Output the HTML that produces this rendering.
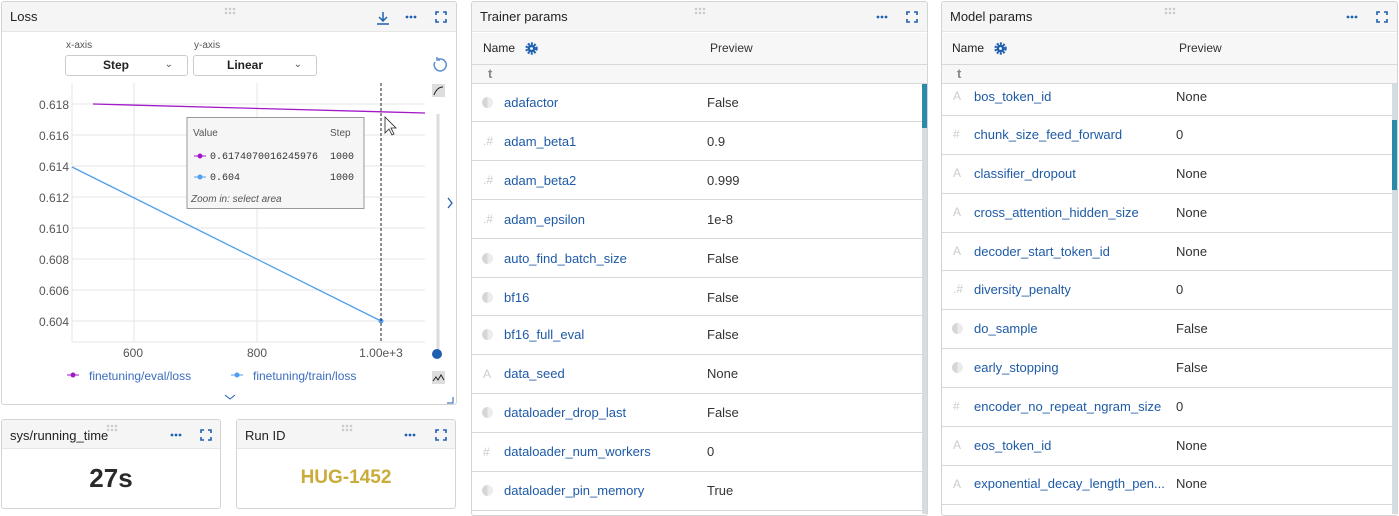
<!DOCTYPE html>
<html><head><meta charset="utf-8"><style>
*{box-sizing:border-box;margin:0;padding:0}
body{width:1399px;height:510px;overflow:hidden;background:#fff;font-family:"Liberation Sans",sans-serif;color:#222;position:relative}
.p{position:absolute;border:1px solid #d4d4d4;border-radius:3px;background:#fff;overflow:hidden}
.h{position:absolute;left:0;right:0;top:0;height:30px;background:#f5f5f5;border-bottom:1px solid #e6e6e6;font-size:13px;line-height:30px;padding-left:8px;color:#222}
.ic{position:absolute}
.grip{position:absolute;width:12px;height:8px;background:radial-gradient(circle,#ccc 1.2px,transparent 1.4px) 0 0/4px 4px}
.row{position:absolute;left:0;right:6px;border-bottom:1px solid #d8d8d8;font-size:13px}
.row .n{position:absolute;left:33px;color:#1e5aa6}
.row .v{position:absolute;color:#333}
.row .t{position:absolute;left:12px;color:#ccc;font-size:12px}
.row .hc{position:absolute;left:11px;width:11px;height:11px;border-radius:50%;background:linear-gradient(90deg,#d6d6d6 50%,#ececec 50%)}
</style></head><body>

<!-- Loss panel -->
<div class="p" style="left:1px;top:1px;width:456px;height:404px">
 <div class="h" style="background:#f5f5f5">Loss</div>
 <div class="grip" style="left:222px;top:5px"></div>
 <svg class="ic" style="left:373px;top:8px" width="16" height="16" viewBox="0 0 16 16"><path d="M8 2v9M4 7l4 4 4-4M2 14h12" stroke="#1f5fb0" stroke-width="1.5" fill="none"/></svg>
 <svg class="ic" style="left:403px;top:13px" width="12" height="4" viewBox="0 0 12 4"><circle cx="2" cy="2" r="1.4" fill="#1f5fb0"/><circle cx="6" cy="2" r="1.4" fill="#1f5fb0"/><circle cx="10" cy="2" r="1.4" fill="#1f5fb0"/></svg>
 <svg class="ic" style="left:433px;top:9px" width="12" height="12" viewBox="0 0 12 12"><path d="M1 4V1h3M8 1h3v3M11 8v3H8M4 11H1V8" stroke="#1f5fb0" stroke-width="1.6" fill="none"/></svg>
 <div style="position:absolute;left:64px;top:38px;font-size:10px;color:#555">x-axis</div>
 <div style="position:absolute;left:192px;top:38px;font-size:10px;color:#555">y-axis</div>
 <div style="position:absolute;left:63px;top:53px;width:123px;height:21px;border:1px solid #ccc;border-radius:3px;font-size:12px;font-weight:bold;line-height:19px;padding-left:37px">Step<span style="position:absolute;right:14px;top:-1px;font-weight:normal;color:#555;font-size:10px">&#8964;</span></div>
 <div style="position:absolute;left:191px;top:53px;width:124px;height:21px;border:1px solid #ccc;border-radius:3px;font-size:12px;font-weight:bold;line-height:19px;padding-left:33px">Linear<span style="position:absolute;right:14px;top:-1px;font-weight:normal;color:#555;font-size:10px">&#8964;</span></div>
 <svg class="ic" style="left:0;top:0" width="456" height="404" viewBox="1 1 456 404">
  <g stroke="#e6e6e6" stroke-width="1">
   <line x1="71" y1="103" x2="424" y2="103"/><line x1="71" y1="134" x2="424" y2="134"/><line x1="71" y1="165" x2="424" y2="165"/><line x1="71" y1="196" x2="424" y2="196"/><line x1="71" y1="227" x2="424" y2="227"/><line x1="71" y1="258" x2="424" y2="258"/><line x1="71" y1="289" x2="424" y2="289"/><line x1="71" y1="320" x2="424" y2="320"/>
   <line x1="133" y1="82" x2="133" y2="341"/><line x1="256" y1="82" x2="256" y2="341"/><line x1="71" y1="82" x2="71" y2="341"/>
   <line x1="71" y1="341" x2="424" y2="341"/>
  </g>
  <g font-family="Liberation Sans" font-size="12" fill="#555" text-anchor="end">
   <text x="68" y="108">0.618</text><text x="68" y="139">0.616</text><text x="68" y="170">0.614</text><text x="68" y="201">0.612</text><text x="68" y="232">0.610</text><text x="68" y="263">0.608</text><text x="68" y="294">0.606</text><text x="68" y="325">0.604</text>
  </g>
  <g font-family="Liberation Sans" font-size="12" fill="#555" text-anchor="middle">
   <text x="132" y="356">600</text><text x="256" y="356">800</text><text x="380" y="356">1.00e+3</text>
  </g>
  <line x1="92" y1="103" x2="424" y2="112" stroke="#a219c8" stroke-width="1.3"/>
  <line x1="71" y1="166" x2="380" y2="320" stroke="#4d9ef0" stroke-width="1.3"/>
  <circle cx="380" cy="320" r="2.5" fill="#4d9ef0"/>
  <line x1="380" y1="82" x2="380" y2="341" stroke="#222" stroke-dasharray="3,2"/>
  <path d="M384 116v16l4-4 3 6 2-1-3-6h5z" fill="#fff" stroke="#222" stroke-width="0.8"/>
  <rect x="186" y="116.5" width="177" height="91" fill="#f6f6f6" stroke="#999"/>
  <g font-family="Liberation Sans" font-size="10" fill="#555"><text x="192" y="135">Value</text><text x="329" y="135">Step</text></g>
  <g font-family="Liberation Mono" font-size="10" fill="#333"><text x="209" y="158">0.6174070016245976</text><text x="329" y="158">1000</text><text x="209" y="179">0.604</text><text x="329" y="179">1000</text></g>
  <line x1="193" y1="155" x2="205" y2="155" stroke="#a219c8"/><circle cx="199" cy="155" r="2.5" fill="#a219c8"/>
  <line x1="193" y1="176" x2="205" y2="176" stroke="#4d9ef0"/><circle cx="199" cy="176" r="2.5" fill="#4d9ef0"/>
  <text x="190" y="201" font-family="Liberation Sans" font-size="10" font-style="italic" fill="#555">Zoom in: select area</text>
  <path d="M434 61a6 6 0 1 0 6-3h-3M436 56v3h3" stroke="#5b8fd0" stroke-width="1.5" fill="none"/>
  <rect x="431" y="83" width="13" height="13" fill="#ddd"/><path d="M433 94q3-8 9-8" stroke="#222" fill="none"/>
  <line x1="437" y1="113" x2="437" y2="350" stroke="#ddd" stroke-width="3"/>
  <circle cx="436" cy="353" r="5" fill="#1f5fb0"/>
  <path d="M447 197l4 5-4 5" stroke="#1f5fb0" stroke-width="1.3" fill="none"/>
  <rect x="431" y="370" width="13" height="13" fill="#ddd"/><path d="M432 380l3-4 2 3 3-5 3 5" stroke="#222" fill="none"/>
  <line x1="66" y1="374" x2="78" y2="374" stroke="#a219c8"/><circle cx="72" cy="374" r="2.5" fill="#a219c8"/>
  <line x1="230" y1="374" x2="242" y2="374" stroke="#4d9ef0"/><circle cx="236" cy="374" r="2.5" fill="#4d9ef0"/>
  <g font-family="Liberation Sans" font-size="12" fill="#3a6dbd"><text x="88" y="379">finetuning/eval/loss</text><text x="252" y="379">finetuning/train/loss</text></g>
  <path d="M224 394l5 4 5-4" stroke="#1f5fb0" fill="none"/>
  <path d="M446 402h6v-6" stroke="#1f5fb0" fill="none"/>
 </svg>
</div>

<!-- sys/running_time -->
<div class="p" style="left:1px;top:419px;width:220px;height:90px">
 <div class="h" style="height:29px;line-height:31px">sys/running_time</div>
 <div class="grip" style="left:104px;top:4px"></div>
 <svg class="ic" style="left:168px;top:13px" width="12" height="4" viewBox="0 0 12 4"><circle cx="2" cy="2" r="1.4" fill="#1f5fb0"/><circle cx="6" cy="2" r="1.4" fill="#1f5fb0"/><circle cx="10" cy="2" r="1.4" fill="#1f5fb0"/></svg>
 <svg class="ic" style="left:198px;top:9px" width="12" height="12" viewBox="0 0 12 12"><path d="M1 4V1h3M8 1h3v3M11 8v3H8M4 11H1V8" stroke="#1f5fb0" stroke-width="1.6" fill="none"/></svg>
 <div style="position:absolute;left:0;right:0;top:43px;text-align:center;font-size:26px;font-weight:bold;color:#2a2a2a">27s</div>
</div>

<!-- Run ID -->
<div class="p" style="left:236px;top:419px;width:220px;height:90px">
 <div class="h" style="height:29px;line-height:31px">Run ID</div>
 <div class="grip" style="left:104px;top:4px"></div>
 <svg class="ic" style="left:167px;top:13px" width="12" height="4" viewBox="0 0 12 4"><circle cx="2" cy="2" r="1.4" fill="#1f5fb0"/><circle cx="6" cy="2" r="1.4" fill="#1f5fb0"/><circle cx="10" cy="2" r="1.4" fill="#1f5fb0"/></svg>
 <svg class="ic" style="left:198px;top:9px" width="12" height="12" viewBox="0 0 12 12"><path d="M1 4V1h3M8 1h3v3M11 8v3H8M4 11H1V8" stroke="#1f5fb0" stroke-width="1.6" fill="none"/></svg>
 <div style="position:absolute;left:0;right:0;top:47px;text-align:center;font-size:19px;font-weight:bold;color:#c9ac3c">HUG-1452</div>
</div>

<!-- Trainer params -->
<div class="p" style="left:471px;top:1px;width:457px;height:515px">
 <div class="h">Trainer params</div>
 <div class="grip" style="left:222px;top:5px"></div>
 <svg class="ic" style="left:404px;top:13px" width="12" height="4" viewBox="0 0 12 4"><circle cx="2" cy="2" r="1.4" fill="#1f5fb0"/><circle cx="6" cy="2" r="1.4" fill="#1f5fb0"/><circle cx="10" cy="2" r="1.4" fill="#1f5fb0"/></svg>
 <svg class="ic" style="left:434px;top:9px" width="12" height="12" viewBox="0 0 12 12"><path d="M1 4V1h3M8 1h3v3M11 8v3H8M4 11H1V8" stroke="#1f5fb0" stroke-width="1.6" fill="none"/></svg>
 <div style="position:absolute;left:0;right:0;top:31px;height:32px;background:#f7f7f7;border-bottom:1px solid #d8d8d8;font-size:12px;line-height:31px">
  <span style="position:absolute;left:11px">Name</span>
  <svg style="position:absolute;left:53px;top:9px" width="13" height="13" viewBox="0 0 12 12"><circle cx="6" cy="6" r="4.6" fill="none" stroke="#1f5fb0" stroke-width="2.2" stroke-dasharray="1.8 1.2"/><circle cx="6" cy="6" r="3.6" fill="#1f5fb0"/><circle cx="6" cy="6" r="1.3" fill="#fff"/></svg>
  <span style="position:absolute;left:238px;color:#333">Preview</span>
 </div>
 <div style="position:absolute;left:0;right:0;top:63px;height:19px;background:#f7f7f7;border-bottom:1px solid #d8d8d8;color:#888;font-size:13px;font-weight:bold;padding-left:16px;line-height:18px">t</div>
 <div style="position:absolute;left:450px;top:82px;width:5px;height:430px;background:#d3dde2"></div>
 <div style="position:absolute;left:450px;top:82px;width:5px;height:44px;background:#2a8aab"></div>
</div>

<!-- Model params -->
<div class="p" style="left:941px;top:1px;width:457px;height:515px">
 <div class="h">Model params</div>
 <div class="grip" style="left:222px;top:5px"></div>
 <svg class="ic" style="left:404px;top:13px" width="12" height="4" viewBox="0 0 12 4"><circle cx="2" cy="2" r="1.4" fill="#1f5fb0"/><circle cx="6" cy="2" r="1.4" fill="#1f5fb0"/><circle cx="10" cy="2" r="1.4" fill="#1f5fb0"/></svg>
 <svg class="ic" style="left:434px;top:9px" width="12" height="12" viewBox="0 0 12 12"><path d="M1 4V1h3M8 1h3v3M11 8v3H8M4 11H1V8" stroke="#1f5fb0" stroke-width="1.6" fill="none"/></svg>
 <div style="position:absolute;left:0;right:0;top:31px;height:32px;background:#f7f7f7;border-bottom:1px solid #d8d8d8;font-size:12px;line-height:31px">
  <span style="position:absolute;left:10px">Name</span>
  <svg style="position:absolute;left:52px;top:9px" width="13" height="13" viewBox="0 0 12 12"><circle cx="6" cy="6" r="4.6" fill="none" stroke="#1f5fb0" stroke-width="2.2" stroke-dasharray="1.8 1.2"/><circle cx="6" cy="6" r="3.6" fill="#1f5fb0"/><circle cx="6" cy="6" r="1.3" fill="#fff"/></svg>
  <span style="position:absolute;left:237px;color:#333">Preview</span>
 </div>
 <div style="position:absolute;left:0;right:0;top:63px;height:19px;background:#f7f7f7;border-bottom:1px solid #d8d8d8;color:#888;font-size:13px;font-weight:bold;padding-left:15px;line-height:18px">t</div>
 <div style="position:absolute;left:450px;top:82px;width:5px;height:430px;background:#d3dde2"></div>
 <div style="position:absolute;left:450px;top:118px;width:5px;height:70px;background:#2a8aab"></div>
</div>

<div style="position:absolute;left:471px;top:0;width:457px">
 <div class="row" style="top:83px;height:39px"><span class="hc" style="top:14px"></span><span class="n" style="top:12px">adafactor</span><span class="v" style="left:236px;top:12px">False</span></div>
 <div class="row" style="top:122px;height:39px"><span class="t" style="top:12px">.#</span><span class="n" style="top:12px">adam_beta1</span><span class="v" style="left:236px;top:12px">0.9</span></div>
 <div class="row" style="top:161px;height:39px"><span class="t" style="top:12px">.#</span><span class="n" style="top:12px">adam_beta2</span><span class="v" style="left:236px;top:12px">0.999</span></div>
 <div class="row" style="top:200px;height:39px"><span class="t" style="top:12px">.#</span><span class="n" style="top:12px">adam_epsilon</span><span class="v" style="left:236px;top:12px">1e-8</span></div>
 <div class="row" style="top:239px;height:39px"><span class="hc" style="top:14px"></span><span class="n" style="top:12px">auto_find_batch_size</span><span class="v" style="left:236px;top:12px">False</span></div>
 <div class="row" style="top:278px;height:38px"><span class="hc" style="top:14px"></span><span class="n" style="top:12px">bf16</span><span class="v" style="left:236px;top:12px">False</span></div>
 <div class="row" style="top:316px;height:39px"><span class="hc" style="top:13px"></span><span class="n" style="top:11px">bf16_full_eval</span><span class="v" style="left:236px;top:11px">False</span></div>
 <div class="row" style="top:355px;height:39px"><span class="t" style="top:12px">A</span><span class="n" style="top:11px">data_seed</span><span class="v" style="left:236px;top:11px">None</span></div>
 <div class="row" style="top:394px;height:39px"><span class="hc" style="top:13px"></span><span class="n" style="top:11px">dataloader_drop_last</span><span class="v" style="left:236px;top:11px">False</span></div>
 <div class="row" style="top:433px;height:39px"><span class="t" style="top:12px">#</span><span class="n" style="top:11px">dataloader_num_workers</span><span class="v" style="left:236px;top:11px">0</span></div>
 <div class="row" style="top:472px;height:39px"><span class="hc" style="top:13px"></span><span class="n" style="top:11px">dataloader_pin_memory</span><span class="v" style="left:236px;top:11px">True</span></div>
</div>

<div style="position:absolute;left:941px;top:0;width:457px">
 <div class="row" style="top:83px;height:33px"><span class="t" style="top:6px">A</span><span class="n" style="top:6px">bos_token_id</span><span class="v" style="left:235px;top:6px">None</span></div>
 <div class="row" style="top:116px;height:39px"><span class="t" style="top:11px">#</span><span class="n" style="top:11px">chunk_size_feed_forward</span><span class="v" style="left:235px;top:11px">0</span></div>
 <div class="row" style="top:155px;height:39px"><span class="t" style="top:11px">A</span><span class="n" style="top:11px">classifier_dropout</span><span class="v" style="left:235px;top:11px">None</span></div>
 <div class="row" style="top:194px;height:39px"><span class="t" style="top:11px">A</span><span class="n" style="top:11px">cross_attention_hidden_size</span><span class="v" style="left:235px;top:11px">None</span></div>
 <div class="row" style="top:233px;height:38px"><span class="t" style="top:11px">A</span><span class="n" style="top:11px">decoder_start_token_id</span><span class="v" style="left:235px;top:11px">None</span></div>
 <div class="row" style="top:271px;height:39px"><span class="t" style="top:11px">.#</span><span class="n" style="top:11px">diversity_penalty</span><span class="v" style="left:235px;top:11px">0</span></div>
 <div class="row" style="top:310px;height:39px"><span class="hc" style="top:13px"></span><span class="n" style="top:11px">do_sample</span><span class="v" style="left:235px;top:11px">False</span></div>
 <div class="row" style="top:349px;height:39px"><span class="hc" style="top:13px"></span><span class="n" style="top:11px">early_stopping</span><span class="v" style="left:235px;top:11px">False</span></div>
 <div class="row" style="top:388px;height:39px"><span class="t" style="top:11px">#</span><span class="n" style="top:11px">encoder_no_repeat_ngram_size</span><span class="v" style="left:235px;top:11px">0</span></div>
 <div class="row" style="top:427px;height:39px"><span class="t" style="top:11px">A</span><span class="n" style="top:11px">eos_token_id</span><span class="v" style="left:235px;top:11px">None</span></div>
 <div class="row" style="top:466px;height:39px"><span class="t" style="top:11px">A</span><span class="n" style="top:10px">exponential_decay_length_pen...</span><span class="v" style="left:235px;top:10px">None</span></div>
</div>
</body></html>
